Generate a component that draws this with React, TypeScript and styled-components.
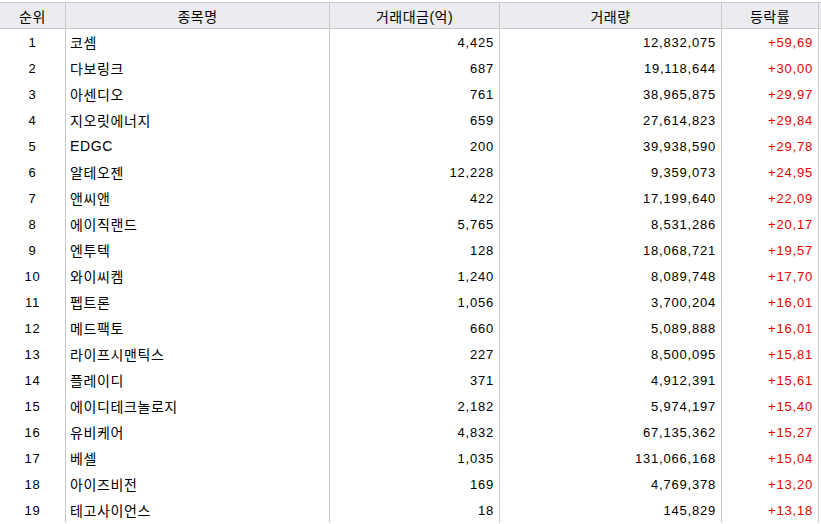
import styled, { createGlobalStyle } from 'styled-components';

const GlobalStyle = createGlobalStyle`
  body {
    margin: 0;
    background: #ffffff;
    font-family: 'Liberation Sans', 'Noto Sans CJK KR', sans-serif;
  }
`;

const Sheet = styled.div`
  padding-top: 2px;
  width: 821px;
`;

const Row = styled.div<{ $head?: boolean }>`
  display: grid;
  grid-template-columns: 66px 264px 170px 222px 97px;
  height: ${({ $head }) => ($head ? '27px' : '26px')};
  background: ${({ $head }) => ($head ? '#ebebf0' : '#ffffff')};
  border-top: ${({ $head }) => ($head ? '1px solid #c9c9cc' : 'none')};
  border-bottom: ${({ $head }) => ($head ? '1px solid #c9c9cc' : 'none')};
  box-sizing: border-box;
`;

const Cell = styled.div<{ $align?: 'left' | 'right' | 'center'; $up?: boolean }>`
  display: flex;
  align-items: center;
  justify-content: ${({ $align }) =>
    $align === 'left' ? 'flex-start' : $align === 'right' ? 'flex-end' : 'center'};
  padding: ${({ $align }) => ($align === 'left' ? '0 0 0 4px' : $align === 'right' ? '0 5px 0 0' : '0')};
  border-right: 1px solid #c9c9cc;
  box-sizing: border-box;
  font-size: 13px;
  letter-spacing: 0.8px;
  color: ${({ $up }) => ($up ? '#e60000' : '#000000')};
  white-space: nowrap;
  overflow: hidden;
`;

const HeadCell = styled(Cell)`
  font-size: 14px;
  letter-spacing: 0.5px;
`;

const NameText = styled.span`
  font-size: 14px;
  letter-spacing: 0.6px;
`;

type Stock = [string, string, string, string];

const stocks: Stock[] = [
  ['코셈', '4,425', '12,832,075', '+59,69'],
  ['다보링크', '687', '19,118,644', '+30,00'],
  ['아센디오', '761', '38,965,875', '+29,97'],
  ['지오릿에너지', '659', '27,614,823', '+29,84'],
  ['EDGC', '200', '39,938,590', '+29,78'],
  ['알테오젠', '12,228', '9,359,073', '+24,95'],
  ['앤씨앤', '422', '17,199,640', '+22,09'],
  ['에이직랜드', '5,765', '8,531,286', '+20,17'],
  ['엔투텍', '128', '18,068,721', '+19,57'],
  ['와이씨켐', '1,240', '8,089,748', '+17,70'],
  ['펩트론', '1,056', '3,700,204', '+16,01'],
  ['메드팩토', '660', '5,089,888', '+16,01'],
  ['라이프시맨틱스', '227', '8,500,095', '+15,81'],
  ['플레이디', '371', '4,912,391', '+15,61'],
  ['에이디테크놀로지', '2,182', '5,974,197', '+15,40'],
  ['유비케어', '4,832', '67,135,362', '+15,27'],
  ['베셀', '1,035', '131,066,168', '+15,04'],
  ['아이즈비전', '169', '4,769,378', '+13,20'],
  ['테고사이언스', '18', '145,829', '+13,18'],
];

export default function App() {
  return (
    <>
      <GlobalStyle />
      <Sheet>
        <Row $head>
          <HeadCell>순위</HeadCell>
          <HeadCell>종목명</HeadCell>
          <HeadCell>거래대금(억)</HeadCell>
          <HeadCell>거래량</HeadCell>
          <HeadCell>등락률</HeadCell>
        </Row>
        {stocks.map(([name, amount, volume, rate], i) => (
          <Row key={name}>
            <Cell>{i + 1}</Cell>
            <Cell $align="left">
              <NameText>{name}</NameText>
            </Cell>
            <Cell $align="right">{amount}</Cell>
            <Cell $align="right">{volume}</Cell>
            <Cell $align="right" $up>
              {rate}
            </Cell>
          </Row>
        ))}
      </Sheet>
    </>
  );
}
